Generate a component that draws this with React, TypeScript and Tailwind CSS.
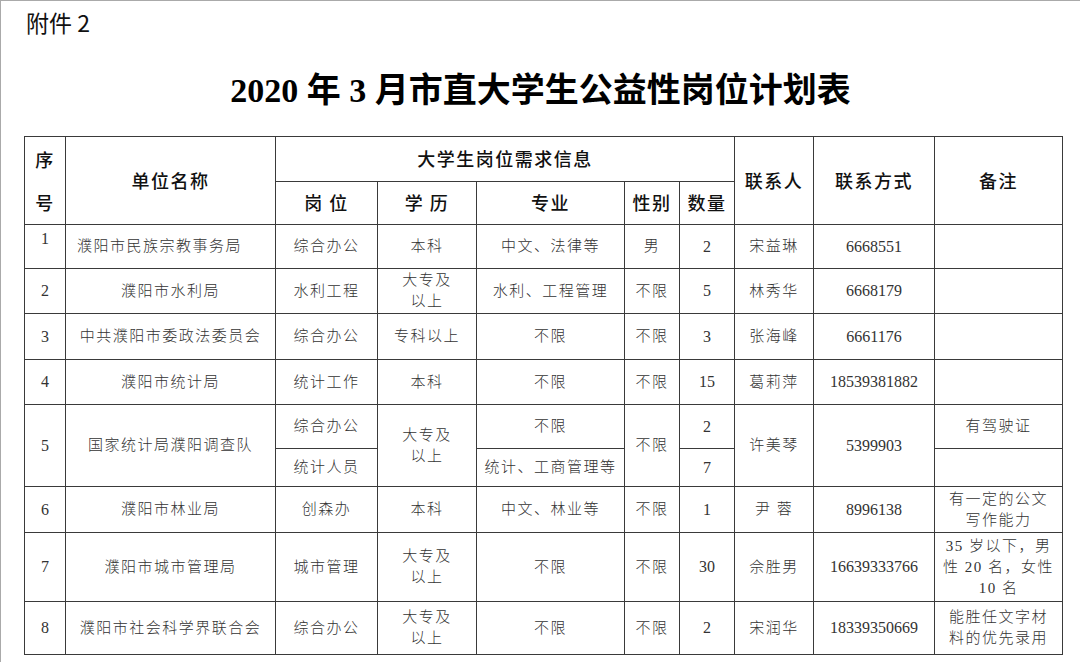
const body = "font-['Liberation_Serif','Noto_Sans_CJK_SC',serif] text-[15px] font-light text-[#333] tracking-[1.5px]";
const head = "font-['Noto_Sans_CJK_SC',sans-serif] text-[18px] font-medium text-[#111]";
const cell = "border border-[#3a3a3a] text-center align-middle p-0";

type Row = {
  no: string;
  unit: string;
  post: string;
  edu: string;
  major: string;
  sex: string;
  count: string;
  person: string;
  phone: string;
  note: string;
  h: string;
};

const rows: Row[] = [
  { no: "2", unit: "濮阳市水利局", post: "水利工程", edu: "大专及\n以上", major: "水利、工程管理", sex: "不限", count: "5", person: "林秀华", phone: "6668179", note: "", h: "h-[45px]" },
  { no: "3", unit: "中共濮阳市委政法委员会", post: "综合办公", edu: "专科以上", major: "不限", sex: "不限", count: "3", person: "张海峰", phone: "6661176", note: "", h: "h-[46px]" },
  { no: "4", unit: "濮阳市统计局", post: "统计工作", edu: "本科", major: "不限", sex: "不限", count: "15", person: "葛莉萍", phone: "18539381882", note: "", h: "h-[45px]" },
];

const rowsAfter: Row[] = [
  { no: "6", unit: "濮阳市林业局", post: "创森办", edu: "本科", major: "中文、林业等", sex: "不限", count: "1", person: "尹 蓉", phone: "8996138", note: "有一定的公文\n写作能力", h: "h-[46px]" },
  { no: "7", unit: "濮阳市城市管理局", post: "城市管理", edu: "大专及\n以上", major: "不限", sex: "不限", count: "30", person: "佘胜男", phone: "16639333766", note: "35 岁以下，男\n性 20 名，女性\n10 名", h: "h-[69px]" },
  { no: "8", unit: "濮阳市社会科学界联合会", post: "综合办公", edu: "大专及\n以上", major: "不限", sex: "不限", count: "2", person: "宋润华", phone: "18339350669", note: "能胜任文字材\n料的优先录用", h: "h-[53px]" },
];

function Lines({ text }: { text: string }) {
  return (
    <>
      {text.split("\n").map((l, i) => (
        <div key={i} className="leading-[21px]">
          {l}
        </div>
      ))}
    </>
  );
}

function DataRow({ r }: { r: Row }) {
  return (
    <tr className={r.h}>
      <td className={`${cell} tracking-normal text-[16px]`}>{r.no}</td>
      <td className={cell}>{r.unit}</td>
      <td className={cell}>{r.post}</td>
      <td className={cell}>
        <Lines text={r.edu} />
      </td>
      <td className={cell}>{r.major}</td>
      <td className={cell}>{r.sex}</td>
      <td className={`${cell} tracking-normal text-[16px]`}>{r.count}</td>
      <td className={cell}>{r.person}</td>
      <td className={`${cell} tracking-normal text-[16px]`}>{r.phone}</td>
      <td className={`${cell} leading-[21px]`}>
        <Lines text={r.note} />
      </td>
    </tr>
  );
}

export default function App() {
  return (
    <div className="w-[1080px] h-[662px] bg-white border-t border-l border-[#aaa] overflow-hidden">
      <div className="pl-[25px] pt-[8px] font-['Noto_Sans_CJK_SC',sans-serif] text-[23px] leading-[26px] text-[#111]">
        附件 2
      </div>
      <h1 className="mt-[36px] text-center font-['Liberation_Serif','Noto_Sans_CJK_SC',serif] font-bold text-[34px] leading-[40px] text-black">
        2020 年 3 月市直大学生公益性岗位计划表
      </h1>
      <table className={`ml-[23px] mt-[25px] w-[1038px] table-fixed border-collapse ${body}`}>
        <colgroup>
          <col className="w-[41px]" />
          <col className="w-[210px]" />
          <col className="w-[102px]" />
          <col className="w-[99px]" />
          <col className="w-[148px]" />
          <col className="w-[55px]" />
          <col className="w-[55px]" />
          <col className="w-[79px]" />
          <col className="w-[121px]" />
          <col className="w-[128px]" />
        </colgroup>
        <thead className={head}>
          <tr className="h-[44px]">
            <td rowSpan={2} className={cell}>
              <div className="leading-[44px]">序</div>
              <div className="leading-[43px]">号</div>
            </td>
            <td rowSpan={2} className={cell}>单位名称</td>
            <td colSpan={5} className={cell}>大学生岗位需求信息</td>
            <td rowSpan={2} className={cell}>联系人</td>
            <td rowSpan={2} className={cell}>联系方式</td>
            <td rowSpan={2} className={cell}>备注</td>
          </tr>
          <tr className="h-[43px]">
            <td className={cell}>岗 位</td>
            <td className={cell}>学 历</td>
            <td className={cell}>专业</td>
            <td className={cell}>性别</td>
            <td className={cell}>数量</td>
          </tr>
        </thead>
        <tbody>
          <tr className="h-[44px]">
            <td className={`${cell} align-top pt-[2px] tracking-normal text-[16px]`}>1</td>
            <td className={`${cell} text-left pl-[11px]`}>濮阳市民族宗教事务局</td>
            <td className={cell}>综合办公</td>
            <td className={cell}>本科</td>
            <td className={cell}>中文、法律等</td>
            <td className={cell}>男</td>
            <td className={`${cell} tracking-normal text-[16px]`}>2</td>
            <td className={cell}>宋益琳</td>
            <td className={`${cell} tracking-normal text-[16px]`}>6668551</td>
            <td className={cell}></td>
          </tr>
          {rows.map((r) => (
            <DataRow key={r.no} r={r} />
          ))}
          <tr className="h-[44px]">
            <td rowSpan={2} className={`${cell} tracking-normal text-[16px]`}>5</td>
            <td rowSpan={2} className={cell}>国家统计局濮阳调查队</td>
            <td className={cell}>综合办公</td>
            <td rowSpan={2} className={cell}>
              <Lines text={"大专及\n以上"} />
            </td>
            <td className={cell}>不限</td>
            <td rowSpan={2} className={cell}>不限</td>
            <td className={`${cell} tracking-normal text-[16px]`}>2</td>
            <td rowSpan={2} className={cell}>许美琴</td>
            <td rowSpan={2} className={`${cell} tracking-normal text-[16px]`}>5399903</td>
            <td className={cell}>有驾驶证</td>
          </tr>
          <tr className="h-[38px]">
            <td className={cell}>统计人员</td>
            <td className={cell}>统计、工商管理等</td>
            <td className={`${cell} tracking-normal text-[16px]`}>7</td>
            <td className={cell}></td>
          </tr>
          {rowsAfter.map((r) => (
            <DataRow key={r.no} r={r} />
          ))}
        </tbody>
      </table>
    </div>
  );
}
